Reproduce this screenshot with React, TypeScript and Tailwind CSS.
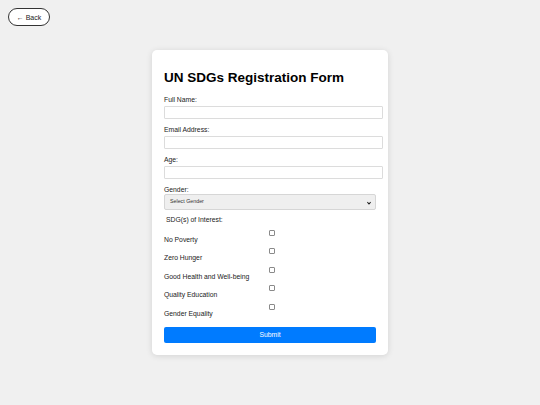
const sdgs = ['No Poverty', 'Zero Hunger', 'Good Health and Well-being', 'Quality Education', 'Gender Equality'];

function Field({ label, type = 'text' }: { label: string; type?: string }) {
  return (
    <div className="flex flex-col">
      <label className="text-[6.8px] leading-[8px] text-[#222]">{label}</label>
      <input
        type={type}
        className="mt-[2px] h-[13px] w-[219px] rounded-[1px] border border-[#dcdcdc] bg-white outline-none"
      />
    </div>
  );
}

export default function App() {
  return (
    <div className="min-h-screen bg-[#f0f0f0] pt-[8px] font-['Liberation_Sans',Arial,sans-serif] text-[#222]">
      <button className="ml-[8px] flex h-[18px] w-[42px] items-center justify-center rounded-full border border-[#333] bg-white text-[7px] leading-none text-[#222]">
        ← Back
      </button>

      <div className="mx-auto mt-[24px] w-[236px] rounded-[5px] bg-white px-[12px] pb-[12px] pt-[20px] shadow-[0_1px_6px_rgba(0,0,0,0.12)]">
        <h1 className="text-[13.5px] font-bold leading-[16px] text-black">UN SDGs Registration Form</h1>

        <div className="mt-[9.5px] flex flex-col gap-[7px]">
          <Field label="Full Name:" />
          <Field label="Email Address:" type="email" />
          <Field label="Age:" type="number" />
          <div className="flex flex-col">
            <label className="text-[6.8px] leading-[8px]">Gender:</label>
            <div className="relative mt-[0.5px] flex h-[16px] w-[212px] items-center rounded-[2px] border border-[#d6d6d6] bg-[#efefef] pl-[5px]">
              <span className="text-[5.3px] leading-none text-[#333]">Select Gender</span>
              <svg className="absolute right-[4px] top-[5.5px]" width="4" height="4" viewBox="0 0 10 10">
                <path d="M1 3 L5 7.5 L9 3" fill="none" stroke="#222" strokeWidth="2.6" />
              </svg>
            </div>
          </div>
        </div>

        <div className="mt-[6px] flex flex-col">
          <span className="pl-[2px] text-[6.8px] leading-[8px]">SDG(s) of Interest:</span>
          <div className="mt-[5.7px] flex flex-col">
            {sdgs.map((s) => (
              <label key={s} className="flex h-[18.6px] flex-col">
                <span className="pl-[105px]">
                  <span className="block h-[6px] w-[6px] rounded-[1px] border border-[#8a8a8a] bg-white" />
                </span>
                <span className="text-[6.8px] leading-[7px]">{s}</span>
              </label>
            ))}
          </div>
        </div>

        <button className="mt-[4.5px] flex h-[16px] w-[212px] items-center justify-center rounded-[2px] bg-[#007bff] text-[6.8px] leading-none text-white">
          Submit
        </button>
      </div>
    </div>
  );
}
